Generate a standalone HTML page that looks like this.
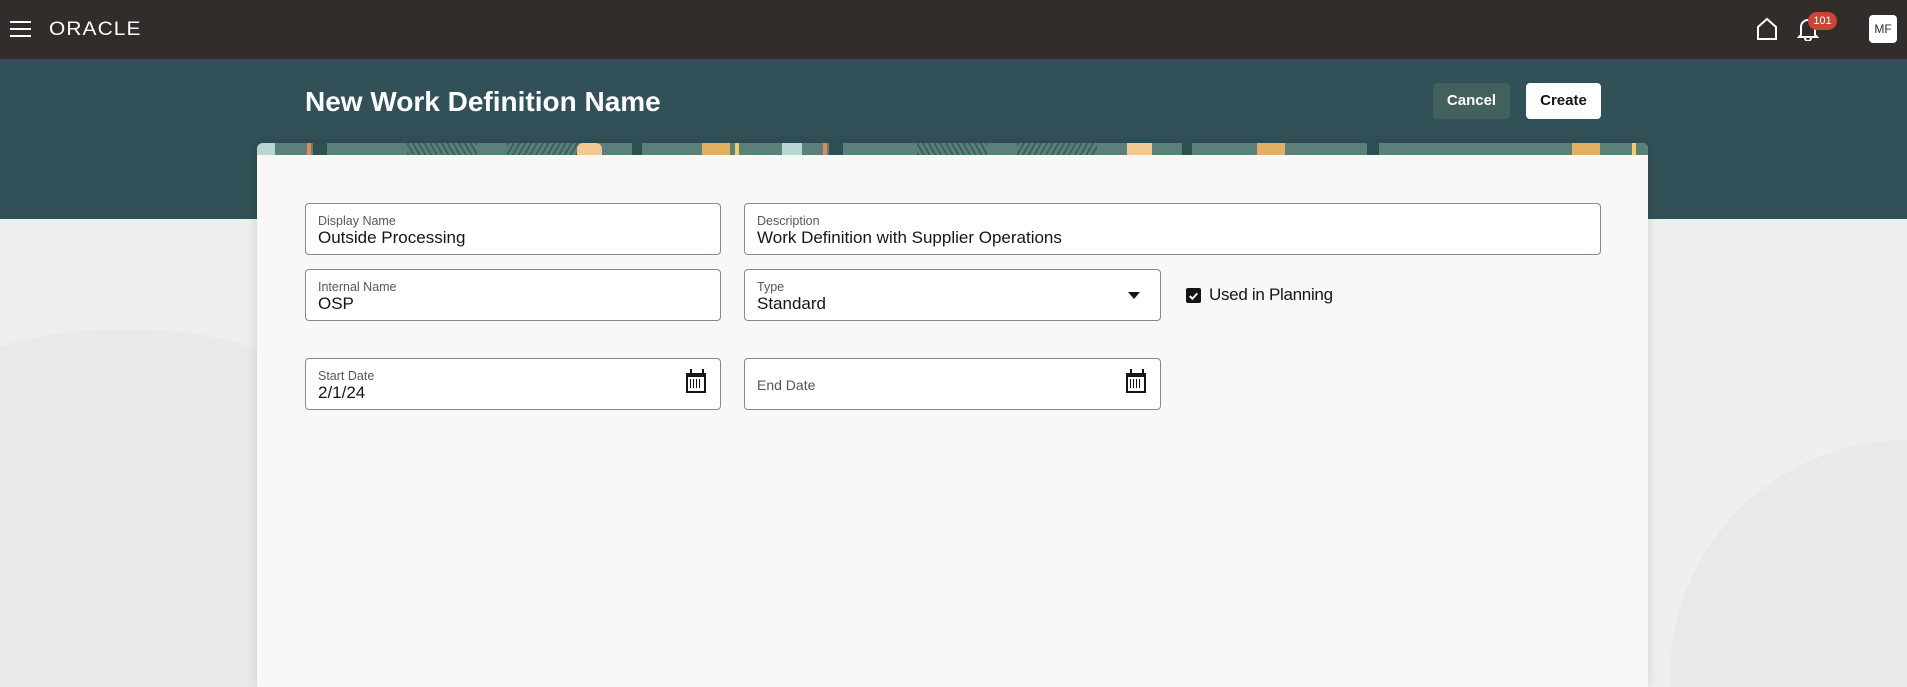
<!DOCTYPE html>
<html><head><meta charset="utf-8">
<style>
*{box-sizing:border-box;margin:0;padding:0}
html,body{width:1907px;height:687px;overflow:hidden}
body{background:#f1efed;font-family:"Liberation Sans",sans-serif;position:relative}
.wrap{position:absolute;left:0;top:0;width:1907px;height:687px;overflow:hidden}
.top{position:absolute;left:0;top:0;width:1907px;height:59px;background:#312d2a}
.band{position:absolute;left:0;top:59px;width:1907px;height:160px;background:#325057}
.bgshape{position:absolute;left:-250px;top:330px;width:750px;height:357px;border-radius:375px 375px 0 0;background:#ebe9e7}
.bgshape2{position:absolute;left:1670px;top:440px;width:237px;height:247px;border-radius:300px 0 0 0;background:#ebe9e7}
.ham{position:absolute;left:10px;top:21px;width:21px}
.ham i{display:block;height:2px;background:#fff;margin-bottom:5px}
.logo{position:absolute;left:49px;top:19px;color:#fff;font-size:19px;letter-spacing:1px;transform:scaleX(1.1);transform-origin:left}
.title{position:absolute;left:305px;top:86px;color:#fff;font-size:28px;font-weight:bold}
.btn{position:absolute;top:83px;height:36px;border-radius:4px;font-size:15px;font-weight:bold;text-align:center;line-height:36px}
.card{position:absolute;left:257px;top:143px;width:1391px;height:544px;background:#f9f8f6;border-radius:6px 6px 0 0;overflow:hidden;box-shadow:0 0 12px rgba(0,0,0,.12)}
.strip{height:12px;background:#5a8079;position:relative;overflow:hidden}
.strip b{position:absolute;top:0;height:12px}
.f{position:absolute;background:#fff;border:1px solid #8a8784;border-radius:4px}
.f .l{position:absolute;left:12px;top:10px;font-size:12.5px;color:#5b5652}
.f .v{position:absolute;left:12px;top:24px;font-size:17px;color:#161513}
.cal{position:absolute;right:14px;top:14px;width:20px;height:20px;border:2px solid #161513;border-top-width:4px}
.cal:after{content:"";position:absolute;left:2px;top:2px;width:12px;height:9px;background:repeating-linear-gradient(90deg,#161513 0 1px,transparent 1px 3px)}
.cal:before{content:"";position:absolute;left:2px;top:-8px;width:10px;height:4px;border-left:2px solid #161513;border-right:2px solid #161513}
</style></head><body><div class="wrap">
<div class="top"></div>
<div class="band"></div>
<div class="bgshape"></div><div class="bgshape2"></div>
<div class="ham"><i></i><i></i><i></i></div>
<div class="logo">ORACLE</div>
<svg style="position:absolute;left:1755px;top:17px" width="24" height="24" viewBox="0 0 24 24"><path d="M3 22V10L12 2l9 8v12z" fill="none" stroke="#fff" stroke-width="2"/></svg>
<svg style="position:absolute;left:1797px;top:17px" width="22" height="24" viewBox="0 0 22 24"><path d="M4 18V10a7 7 0 0 1 14 0v8l2 2H2z M8 21a3 3 0 0 0 6 0" fill="none" stroke="#fff" stroke-width="2"/></svg>
<div style="position:absolute;left:1808px;top:12px;width:29px;height:18px;border-radius:9px;background:#c74634;color:#fff;font-size:11px;line-height:18px;text-align:center">101</div>
<div style="position:absolute;left:1869px;top:15px;width:28px;height:28px;border-radius:4px;background:#fff;color:#312d2a;font-size:12px;line-height:28px;text-align:center">MF</div>
<div class="title">New Work Definition Name</div>
<div class="btn" style="left:1433px;width:77px;background:#43605f;color:#fff">Cancel</div>
<div class="btn" style="left:1526px;width:75px;background:#fff;color:#161513">Create</div>
<div class="card">
 <div class="strip">
  <b style="left:0;width:18px;background:#b9d5d4"></b><b style="left:50px;width:4px;background:#e08a55"></b><b style="left:56px;width:14px;background:#2f4f52"></b>
  <b style="left:150px;width:70px;background:repeating-linear-gradient(60deg,#3f5f5e 0 2px,transparent 2px 5px)"></b>
  <b style="left:250px;width:80px;background:repeating-linear-gradient(120deg,#3f5f5e 0 2px,transparent 2px 5px)"></b>
  <b style="left:320px;width:25px;background:#f0c993;border-radius:6px 6px 0 0"></b><b style="left:375px;width:10px;background:#2f4f52"></b>
  <b style="left:445px;width:28px;background:#e2ae64"></b><b style="left:478px;width:4px;background:#f0cf6a"></b><b style="left:525px;width:20px;background:#b9d5d4"></b>
  <b style="left:566px;width:4px;background:#e08a55"></b><b style="left:572px;width:14px;background:#2f4f52"></b>
  <b style="left:660px;width:70px;background:repeating-linear-gradient(60deg,#3f5f5e 0 2px,transparent 2px 5px)"></b>
  <b style="left:760px;width:80px;background:repeating-linear-gradient(120deg,#3f5f5e 0 2px,transparent 2px 5px)"></b>
  <b style="left:870px;width:25px;background:#f0c993"></b><b style="left:925px;width:10px;background:#2f4f52"></b>
  <b style="left:1000px;width:28px;background:#e2ae64"></b><b style="left:1110px;width:12px;background:#2f4f52"></b>
  <b style="left:1315px;width:28px;background:#e2ae64"></b><b style="left:1375px;width:4px;background:#f0cf6a"></b>
 </div>
</div>
<div class="f" style="left:305px;top:203px;width:416px;height:52px"><div class="l">Display Name</div><div class="v">Outside Processing</div></div>
<div class="f" style="left:744px;top:203px;width:857px;height:52px"><div class="l">Description</div><div class="v">Work Definition with Supplier Operations</div></div>
<div class="f" style="left:305px;top:269px;width:416px;height:52px"><div class="l">Internal Name</div><div class="v">OSP</div></div>
<div class="f" style="left:744px;top:269px;width:417px;height:52px"><div class="l">Type</div><div class="v">Standard</div>
 <div style="position:absolute;right:20px;top:22px;width:0;height:0;border-left:6px solid transparent;border-right:6px solid transparent;border-top:7px solid #161513"></div></div>
<div style="position:absolute;left:1186px;top:288px;width:15px;height:15px;background:#161513;border-radius:2px"><svg width="15" height="15" viewBox="0 0 14 14"><path d="M3.5 7.5l2.5 2.5 4.5-5" fill="none" stroke="#fff" stroke-width="1.8"/></svg></div>
<div style="position:absolute;left:1209px;top:285px;font-size:17px;color:#161513;letter-spacing:-0.3px">Used in Planning</div>
<div class="f" style="left:305px;top:358px;width:416px;height:52px"><div class="l">Start Date</div><div class="v">2/1/24</div><div class="cal"></div></div>
<div class="f" style="left:744px;top:358px;width:417px;height:52px"><div class="l" style="top:18px;font-size:14px">End Date</div><div class="cal"></div></div>
</div></body></html>
